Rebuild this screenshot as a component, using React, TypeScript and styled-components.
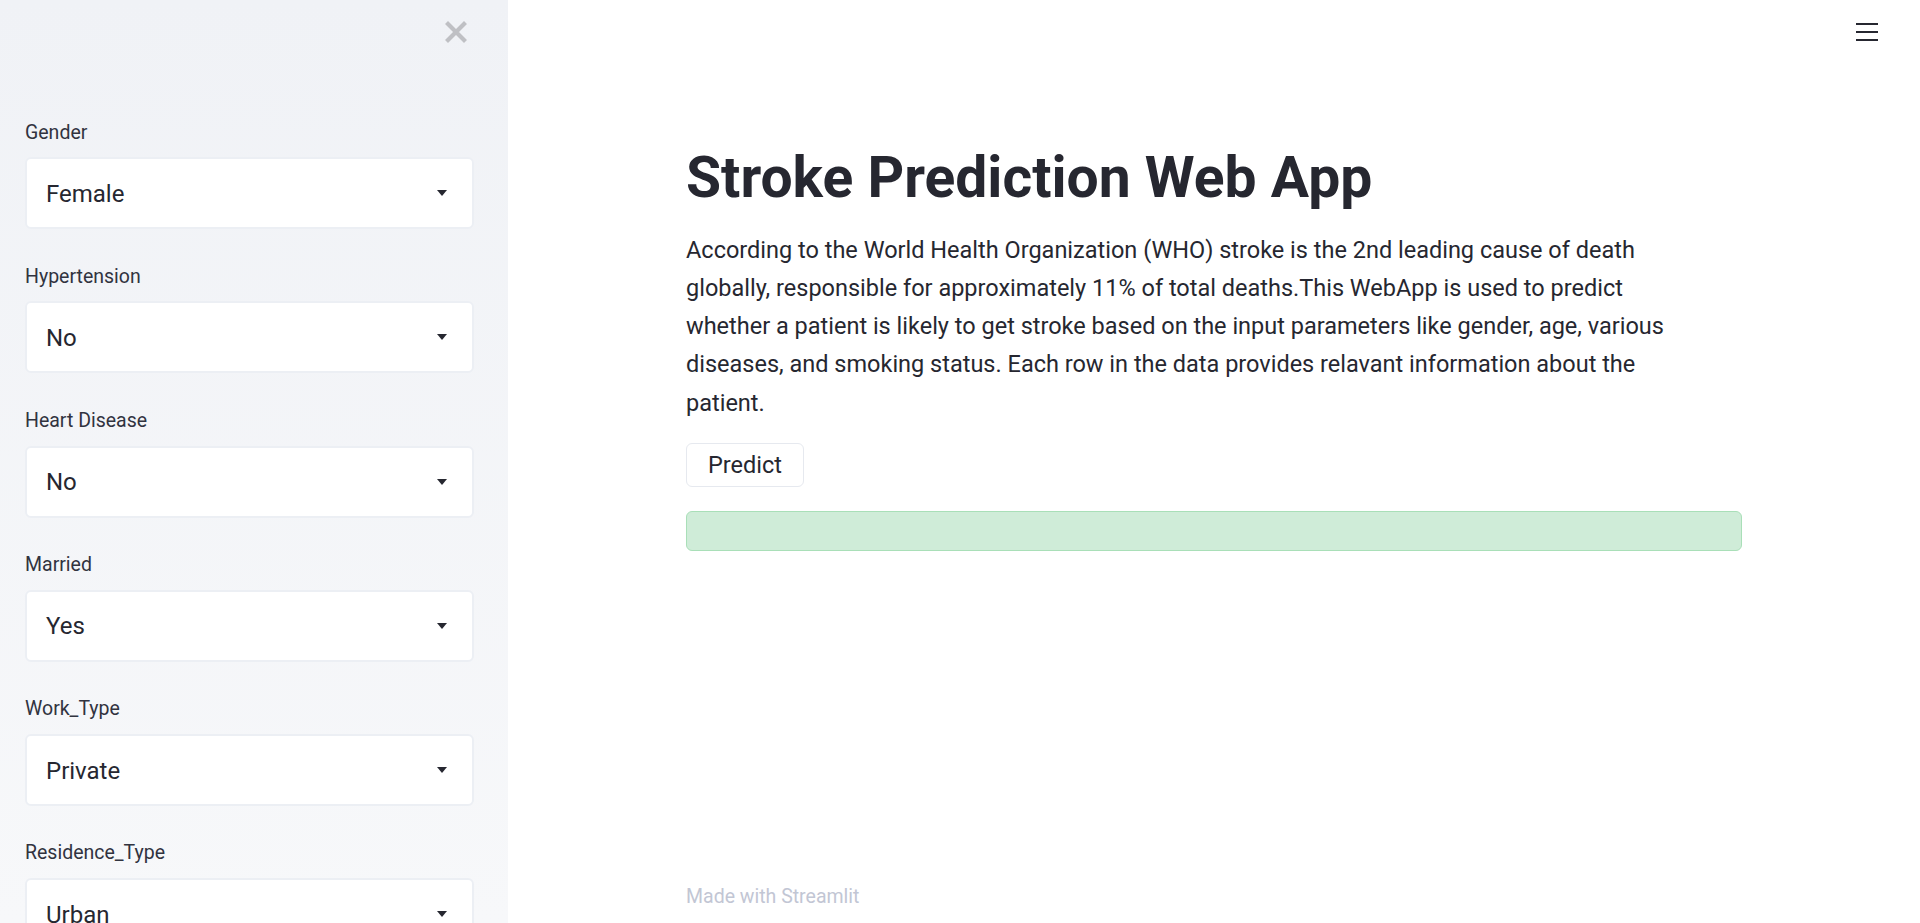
import React from "react";
import styled, { createGlobalStyle } from "styled-components";

const GlobalStyle = createGlobalStyle`
  html, body {
    margin: 0;
    padding: 0;
    height: 100%;
    overflow: hidden;
    background: #ffffff;
  }
  body {
    font-family: Roboto, "Liberation Sans", Arial, sans-serif;
    color: #262730;
  }
  * { box-sizing: border-box; }
`;

const Shell = styled.div`
  display: flex;
  width: 100vw;
  height: 100vh;
  overflow: hidden;
`;

const Sidebar = styled.aside`
  flex: 0 0 508px;
  width: 508px;
  height: 100%;
  overflow: hidden;
  background: linear-gradient(180deg, #f0f2f6 0%, #f7f8fa 100%);
  display: flex;
  flex-direction: column;
`;

const CloseRow = styled.div`
  height: 64px;
  flex: 0 0 64px;
  display: flex;
  align-items: center;
  justify-content: flex-end;
  padding-right: 41px;
`;

const CloseButton = styled.button`
  border: none;
  background: transparent;
  padding: 0;
  width: 22px;
  height: 22px;
  display: flex;
  align-items: center;
  justify-content: center;
  cursor: pointer;
`;

const Form = styled.div`
  display: flex;
  flex-direction: column;
  gap: 32.4px;
  padding: 53.5px 34px 0 25px;
`;

const Field = styled.div`
  display: flex;
  flex-direction: column;
  gap: 10.8px;
`;

const Label = styled.label`
  font-size: 19.5px;
  line-height: 29px;
  height: 29px;
  color: #31333f;
  white-space: nowrap;
`;

const SelectBox = styled.div`
  height: 72px;
  border: 2px solid #eceff4;
  border-radius: 6px;
  background: #ffffff;
  display: flex;
  align-items: center;
  justify-content: space-between;
  padding: 0 25px 0 19px;
  flex: 0 0 72px;
`;

const SelectValue = styled.span`
  font-size: 24px;
  line-height: 30px;
  color: #262730;
  padding-top: 1px;
`;

const Caret = styled.span`
  width: 0;
  height: 0;
  border-left: 5px solid transparent;
  border-right: 5px solid transparent;
  border-top: 6px solid #262730;
`;

const Main = styled.main`
  flex: 1 1 auto;
  height: 100%;
  display: flex;
  flex-direction: column;
  align-items: center;
  background: #ffffff;
  overflow: hidden;
`;

const TopBar = styled.header`
  align-self: stretch;
  height: 64px;
  flex: 0 0 64px;
  display: flex;
  align-items: center;
  justify-content: flex-end;
  padding-right: 42px;
`;

const MenuButton = styled.button`
  border: none;
  background: transparent;
  padding: 0;
  width: 22px;
  height: 22px;
  display: flex;
  align-items: center;
  justify-content: center;
  cursor: pointer;
`;

const Content = styled.section`
  width: 1056px;
  padding-top: 80px;
  display: flex;
  flex-direction: column;
  align-items: flex-start;
`;

const Title = styled.h1`
  margin: 0;
  font-size: 57px;
  line-height: 67px;
  font-weight: 700;
  color: #262730;
  letter-spacing: 0;
  white-space: nowrap;
`;

const Paragraph = styled.p`
  margin: 19.5px 0 0 0;
  font-size: 23.5px;
  line-height: 38.3px;
  color: #262730;
  white-space: nowrap;
`;

const PredictButton = styled.button`
  margin-top: 21.5px;
  height: 44px;
  padding: 0 21px;
  border: 1px solid #e6e9ef;
  border-radius: 6px;
  background: #ffffff;
  font-family: Roboto, "Liberation Sans", Arial, sans-serif;
  font-size: 23.5px;
  color: #262730;
  display: inline-flex;
  align-items: center;
  cursor: pointer;
`;

const SuccessBox = styled.div`
  margin-top: 24px;
  width: 100%;
  height: 40px;
  border: 1px solid #a9dfb8;
  border-radius: 6px;
  background: #cfecd8;
`;

const Footer = styled.footer`
  margin-top: auto;
  width: 1056px;
  padding-bottom: 14px;
  font-size: 19.5px;
  line-height: 24px;
  color: #c2c6d4;
`;

const fields: { label: string; value: string }[] = [
  { label: "Gender", value: "Female" },
  { label: "Hypertension", value: "No" },
  { label: "Heart Disease", value: "No" },
  { label: "Married", value: "Yes" },
  { label: "Work_Type", value: "Private" },
  { label: "Residence_Type", value: "Urban" },
];

const CloseIcon = () => (
  <svg width="22" height="22" viewBox="0 0 22 22" aria-hidden="true">
    <path
      d="M3 3 L19 19 M19 3 L3 19"
      stroke="#bfc0c4"
      strokeWidth="4.2"
      strokeLinecap="square"
      fill="none"
    />
  </svg>
);

const MenuIcon = () => (
  <svg width="22" height="22" viewBox="0 0 22 22" aria-hidden="true">
    <rect x="0" y="2" width="22" height="2" fill="#262730" />
    <rect x="0" y="10" width="22" height="2" fill="#262730" />
    <rect x="0" y="18" width="22" height="2" fill="#262730" />
  </svg>
);

export default function App() {
  return (
    <>
      <GlobalStyle />
      <Shell>
        <Sidebar>
          <CloseRow>
            <CloseButton aria-label="Close sidebar">
              <CloseIcon />
            </CloseButton>
          </CloseRow>
          <Form>
            {fields.map((f) => (
              <Field key={f.label}>
                <Label>{f.label}</Label>
                <SelectBox>
                  <SelectValue>{f.value}</SelectValue>
                  <Caret />
                </SelectBox>
              </Field>
            ))}
          </Form>
        </Sidebar>
        <Main>
          <TopBar>
            <MenuButton aria-label="Menu">
              <MenuIcon />
            </MenuButton>
          </TopBar>
          <Content>
            <Title>Stroke Prediction Web App</Title>
            <Paragraph>
              According to the World Health Organization (WHO) stroke is the 2nd leading cause of death
              <br />
              globally, responsible for approximately 11% of total deaths.This WebApp is used to predict
              <br />
              whether a patient is likely to get stroke based on the input parameters like gender, age, various
              <br />
              diseases, and smoking status. Each row in the data provides relavant information about the
              <br />
              patient.
            </Paragraph>
            <PredictButton>Predict</PredictButton>
            <SuccessBox />
          </Content>
          <Footer>Made with Streamlit</Footer>
        </Main>
      </Shell>
    </>
  );
}
